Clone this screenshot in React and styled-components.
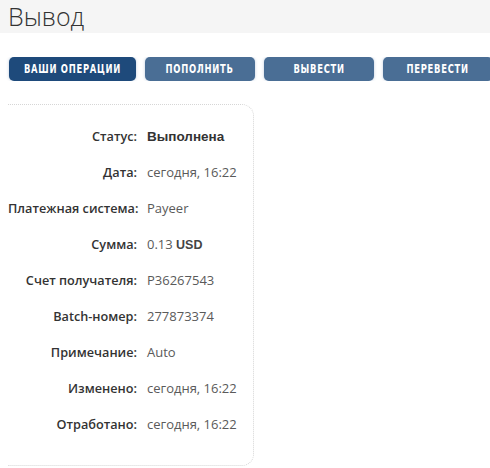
import React from "react";
import styled, { createGlobalStyle } from "styled-components";

const GlobalStyle = createGlobalStyle`
  body {
    margin: 0;
    background: #fff;
    font-family: "Open Sans", "Liberation Sans", sans-serif;
  }
`;

const Header = styled.div`
  height: 33px;
  background: #f5f5f5;
  padding-left: 8px;
  display: flex;
  align-items: center;
`;

const Title = styled.h1`
  margin: 0;
  font-family: "Open Sans", "Liberation Sans", sans-serif;
  font-weight: 300;
  font-size: 25px;
  color: #333;
  line-height: 33px;
`;

const Tabs = styled.div`
  display: flex;
  gap: 9px;
  margin-top: 24px;
  padding-left: 9px;
  overflow: hidden;
`;

const Tab = styled.button`
  flex: none;
  width: ${(p) => p.w}px;
  height: 24px;
  padding: 0;
  border: none;
  border-radius: 5px;
  background: ${(p) => (p.active ? "#1e4a7b" : "#4a6e95")};
  box-shadow: 0 0 3px rgba(120, 150, 190, 0.5);
  color: #fff;
  cursor: pointer;
  display: flex;
  align-items: center;
  justify-content: center;
`;

// narrow bold caps, squeezed to match the condensed face in the picture
const TabText = styled.span`
  display: inline-block;
  transform: scaleX(0.73);
  font-family: "DejaVu Sans", "Liberation Sans", sans-serif;
  font-weight: 700;
  font-size: 11.5px;
  letter-spacing: 1px;
  text-transform: uppercase;
  white-space: nowrap;
`;

const Card = styled.div`
  margin: 23px 0 0 8px;
  width: 246px;
  box-sizing: border-box;
  border: 1px dotted #d6d6d6;
  border-left: none;
  border-radius: 0 12px 12px 0;
  padding: 13px 0 23px;
`;

const Row = styled.div`
  display: grid;
  grid-template-columns: 129px 1fr;
  column-gap: 10px;
  height: 36px;
  align-items: center;
`;

const Label = styled.span`
  text-align: right;
  font-size: 12.7px;
  font-weight: 600;
  color: #333;
  white-space: nowrap;
`;

const Value = styled.span`
  font-size: ${(p) => (p.strong ? 13.5 : 13)}px;
  color: ${(p) => (p.strong ? "#333" : "#5a5a5a")};
  font-weight: ${(p) => (p.strong ? 700 : 400)};
  font-family: ${(p) => (p.strong ? '"Liberation Sans", sans-serif' : "inherit")};
  white-space: nowrap;
`;

const Currency = styled.b`
  font-family: "Liberation Sans", sans-serif;
  font-size: 12.5px;
  font-weight: 700;
  color: #444;
`;

const rows = [
  ["Статус:", <Value strong key="s">Выполнена</Value>],
  ["Дата:", <Value key="d">сегодня, 16:22</Value>],
  ["Платежная система:", <Value key="p">Payeer</Value>],
  ["Сумма:", <Value key="a">0.13 <Currency>USD</Currency></Value>],
  ["Счет получателя:", <Value key="r">P36267543</Value>],
  ["Batch-номер:", <Value key="b">277873374</Value>],
  ["Примечание:", <Value key="n">Auto</Value>],
  ["Изменено:", <Value key="c">сегодня, 16:22</Value>],
  ["Отработано:", <Value key="o">сегодня, 16:22</Value>],
];

const tabs = [
  { label: "Ваши операции", w: 127, active: true },
  { label: "Пополнить", w: 110 },
  { label: "Вывести", w: 110 },
  { label: "Перевести", w: 110 },
];

export default function App() {
  return (
    <>
      <GlobalStyle />
      <Header>
        <Title>Вывод</Title>
      </Header>
      <Tabs>
        {tabs.map((t) => (
          <Tab key={t.label} w={t.w} active={t.active}>
            <TabText>{t.label}</TabText>
          </Tab>
        ))}
      </Tabs>
      <Card>
        {rows.map(([label, value]) => (
          <Row key={label}>
            <Label>{label}</Label>
            {value}
          </Row>
        ))}
      </Card>
    </>
  );
}
